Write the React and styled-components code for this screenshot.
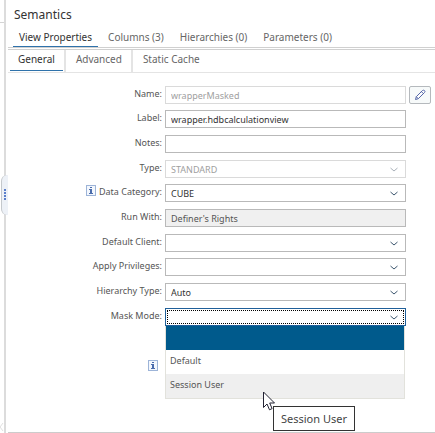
import React from "react";
import styled, { createGlobalStyle, css } from "styled-components";

const GlobalStyle = createGlobalStyle`
  *, *::before, *::after { box-sizing: border-box; }
  body {
    margin: 0;
    background: #fff;
    color: #555;
    font-family: "Noto Sans", "Open Sans", sans-serif;
    font-size: 9px;
  }
  button, input, select { font: inherit; color: inherit; }
`;

const Page = styled.div`
  display: grid;
  grid-template-columns: 8px minmax(0, 1fr);
  min-height: 100vh;
  overflow: hidden;
`;

const Gutter = styled.div`
  display: flex;
  flex-direction: column;
  justify-content: space-between;
  padding-bottom: 1px;
  background: linear-gradient(90deg, #fff 4px, #dcdcdc 4px, #dcdcdc 6px, #fff 6px);

  &::before {
    content: "";
    width: 4px;
    height: 23px;
    border-bottom: 1px solid #d4d4d4;
  }
`;

const Splitter = styled.button`
  display: flex;
  align-items: center;
  justify-content: center;
  width: 7px;
  height: 40px;
  margin: 0 0 56px 1px;
  padding: 0;
  border: 0;
  border-left: 1px solid #c4c8cc;
  border-radius: 6px 0 0 6px;
  background: #edf1f7;
  color: #5b7fcb;
`;

const GutterMark = styled.svg`
  width: 4px;
  height: 10px;
`;

const Panel = styled.main`
  display: flex;
  flex-direction: column;
  padding-top: 7px;
  border-bottom: 1px solid #ccc;
`;

const Title = styled.h1`
  margin: 0;
  padding-left: 6px;
  color: #333;
  font-size: 12px;
  font-weight: 400;
  line-height: 16px;
`;

const TabBar = styled.nav`
  display: flex;
  gap: 4px;
  height: 25px;
  padding: 4px 0 0 5px;
  border-bottom: 1px solid #d0d0d0;
`;

const Tab = styled.button`
  height: 20px;
  padding: 0 6px;
  border: 0;
  border-bottom: 1px solid ${(p) => (p.$active ? "#2f72ab" : "transparent")};
  background: none;
  color: ${(p) => (p.$active ? "#333" : "#666")};
  font-size: 10px;
  line-height: 16px;
  white-space: nowrap;
`;

const SubTabBar = styled.nav`
  display: flex;
  height: 24px;
  margin-top: 1px;
  border-top: 1px solid #d0d0d0;
  border-bottom: 1px solid #e4e4e4;
`;

const SubTabCell = styled.div`
  padding: 0 1px 0 2px;

  &:not(:last-child) { border-right: 2px solid #e4e4e4; }
`;

const SubTab = styled(Tab)`
  height: 21px;
  padding: 0 8px 3px;
`;

const Form = styled.form`
  display: grid;
  grid-template-columns: 154px minmax(0, 1fr) 22px;
  grid-auto-rows: 24px 25px 25px;
  column-gap: 3px;
  padding: 13px 4px 24px 0;
`;

const Row = styled.div`
  display: grid;
  grid-column: 1 / -1;
  grid-template-columns: subgrid;
  align-items: start;
`;

const LabelCell = styled.div`
  display: flex;
  align-items: center;
  justify-content: flex-end;
  gap: 3px;
  height: 17px;
`;

const Label = styled.label`
  line-height: 16px;
  padding-bottom: 1px;
  white-space: nowrap;
`;

const SpareRow = styled.div`
  grid-column: 1 / -1;
`;

const InfoButton = styled.button`
  display: block;
  width: 10px;
  height: 11px;
  margin: ${(p) => (p.$alone ? "0 4px 0 0" : "0 0 4px")};
  padding: 0;
  border: 0;
  background: none;
`;

const fieldLook = css`
  display: block;
  width: 100%;
  height: 18px;
  margin: 0;
  padding: 0 5px;
  border: 1px solid #b9b9b9;
  border-radius: 0;
  background: #fff;
  color: #333;
  opacity: 1;
  outline: none;

  &:disabled {
    border-color: #dadada;
    color: #a0a0a0;
  }
`;

const TextField = styled.input`
  ${fieldLook}

  &[readonly] {
    background: #f0f0f0;
    color: #555;
  }
`;

const SelectWrap = styled.div`
  position: relative;
  color: ${(p) => (p.$disabled ? "#a8b0b8" : "#3c566e")};
`;

const Select = styled.select`
  ${fieldLook}
  appearance: none;
  ${(p) =>
    p.$open &&
    css`
      border-color: #1f5f99;
      outline: 1px dotted #000;
      outline-offset: -3px;
    `}
`;

const Chevron = styled.svg`
  position: absolute;
  top: 7px;
  right: 8px;
  width: 8px;
  height: 5px;
  pointer-events: none;
`;

const EditButton = styled.button`
  display: grid;
  place-items: center;
  width: 22px;
  height: 18px;
  padding: 0;
  border: 1px solid #b5b9bd;
  border-radius: 2px;
  background: #f7fafa;
`;

const Menu = styled.ul`
  position: absolute;
  z-index: 1;
  top: 100%;
  left: 0;
  right: 1px;
  margin: 0;
  padding: 0;
  list-style: none;
  border: 1px solid #e2e2dc;
  border-top: 0;
  background: #fff;
  color: #555;
`;

const Option = styled.li`
  position: relative;
  height: 24px;
  padding: 0 4px;
  line-height: 22px;
  background: ${(p) => (p.$selected ? "#005a8c" : p.$hovered ? "#efefef" : "#fff")};
`;

const Tooltip = styled.div`
  position: absolute;
  top: 32px;
  left: 107px;
  padding: 0 7px;
  border: 1px solid #333;
  background: #fff;
  color: #444;
  font-size: 11px;
  line-height: 23px;
  white-space: nowrap;
`;

const Pointer = styled.svg`
  position: absolute;
  z-index: 1;
  top: 17px;
  left: 97px;
  width: 13px;
  height: 20px;
`;

const Info = ({ alone }) => (
  <InfoButton type="button" aria-label="Information" $alone={alone}>
    <svg width="10" height="11" viewBox="0 0 10 11" shapeRendering="crispEdges">
      <rect x=".5" y=".5" width="9" height="10" fill="#f3f7fd" stroke="#9db4d8" />
      <path d="M4 2h2v1H4zM3 4h3v4h1v1H3V8h1V5H3z" fill="#4a6cac" />
    </svg>
  </InfoButton>
);

const Field = ({ id, label, info, children, action }) => (
  <Row>
    <LabelCell>
      {info && <Info />}
      <Label htmlFor={id}>{label}:</Label>
    </LabelCell>
    {children}
    {action}
  </Row>
);

const DropDown = ({ id, value = "", disabled, open, children }) => (
  <SelectWrap $disabled={disabled}>
    <Select id={id} defaultValue={value} disabled={disabled} $open={open}>
      <option>{value}</option>
    </Select>
    <Chevron viewBox="0 0 8 5" fill="none" stroke="currentColor">
      <path d="M.5 1 4 4 7.5 1" />
    </Chevron>
    {children}
  </SelectWrap>
);

const tabs = ["View Properties", "Columns (3)", "Hierarchies (0)", "Parameters (0)"];
const subTabs = ["General", "Advanced", "Static Cache"];

export default function App() {
  return (
    <>
      <GlobalStyle />
      <Page>
        <Gutter>
          <Splitter type="button" aria-label="Resize panel">
            <svg width="2" height="11" viewBox="0 0 2 11" fill="currentColor">
              <path d="M0 0h2v2H0zM0 3h2v2H0zM0 6h2v2H0zM0 9h2v2H0z" />
            </svg>
          </Splitter>
          <GutterMark viewBox="0 0 4 10" fill="none" stroke="#e0e0e0">
            <path d="M3 1 0 5l3 4" />
          </GutterMark>
        </Gutter>
        <Panel>
          <Title>Semantics</Title>
          <TabBar>
            {tabs.map((name, i) => (
              <Tab key={name} type="button" $active={i === 0}>{name}</Tab>
            ))}
          </TabBar>
          <SubTabBar>
            {subTabs.map((name, i) => (
              <SubTabCell key={name}>
                <SubTab type="button" $active={i === 0}>{name}</SubTab>
              </SubTabCell>
            ))}
          </SubTabBar>
          <Form>
            <Field
              id="name"
              label="Name"
              action={
                <EditButton type="button" aria-label="Edit name">
                  <svg width="12" height="12" viewBox="0 0 12 12" fill="#fff" stroke="#5366a8" strokeLinejoin="round">
                    <path d="M1.5 10.5 2.3 7.7 8.5 1.5Q9.5.8 10.5 1.6T10.5 3.5L4.3 9.7Z" />
                    <path d="m2.3 7.7 2 2M7.4 2.6l2 2" />
                  </svg>
                </EditButton>
              }
            >
              <TextField id="name" defaultValue="wrapperMasked" disabled />
            </Field>
            <Field id="label" label="Label">
              <TextField id="label" defaultValue="wrapper.hdbcalculationview" />
            </Field>
            <Field id="notes" label="Notes">
              <TextField id="notes" defaultValue="" />
            </Field>
            <Field id="type" label="Type">
              <DropDown id="type" value="STANDARD" disabled />
            </Field>
            <Field id="category" label="Data Category" info>
              <DropDown id="category" value="CUBE" />
            </Field>
            <Field id="run-with" label="Run With">
              <TextField id="run-with" defaultValue="Definer's Rights" readOnly />
            </Field>
            <Field id="client" label="Default Client">
              <DropDown id="client" />
            </Field>
            <Field id="privileges" label="Apply Privileges">
              <DropDown id="privileges" />
            </Field>
            <Field id="hierarchy" label="Hierarchy Type">
              <DropDown id="hierarchy" value="Auto" />
            </Field>
            <Field id="mask" label="Mask Mode">
              <DropDown id="mask" open>
                <Menu role="listbox" aria-label="Mask Mode">
                  <Option role="option" aria-label="None" aria-selected="true" $selected />
                  <Option role="option" aria-selected="false">Default</Option>
                  <Option role="option" aria-selected="false" $hovered>
                    Session User
                    <Tooltip role="tooltip">Session User</Tooltip>
                    <Pointer viewBox="0 0 13 20" fill="#fff" stroke="#222233">
                      <path d="M.5 1v15.5L4 13l2.5 5.8 2.6-1.2L6.7 12h4.8Z" />
                    </Pointer>
                  </Option>
                </Menu>
              </DropDown>
            </Field>
            <SpareRow />
            <Row>
              <LabelCell>
                <Info alone />
              </LabelCell>
            </Row>
          </Form>
        </Panel>
      </Page>
    </>
  );
}
